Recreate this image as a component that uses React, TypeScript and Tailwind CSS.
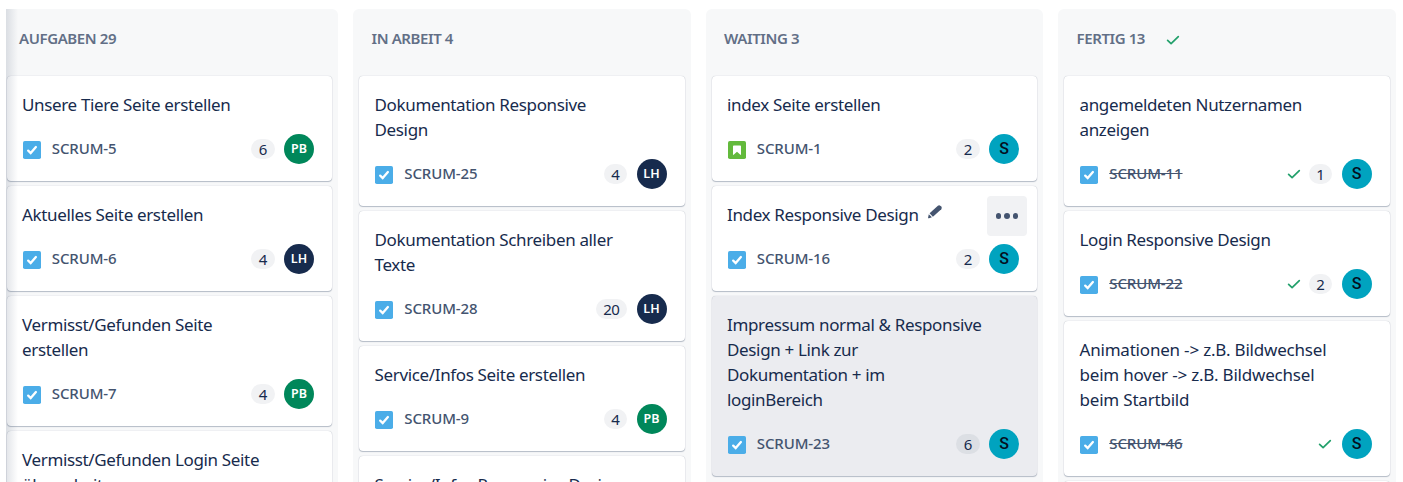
import React from 'react';

type Person = 'PB' | 'LH' | 'S';

interface Issue {
  lines: string[];
  id: string;
  points?: number;
  person: Person;
  story?: boolean;
  done?: boolean;
  hovered?: boolean;
  selected?: boolean;
  loose?: boolean;
}

interface ColumnData {
  title: string;
  done?: boolean;
  issues: Issue[];
}

const columns: ColumnData[] = [
  {
    title: 'AUFGABEN 29',
    issues: [
      { lines: ['Unsere Tiere Seite erstellen'], id: 'SCRUM-5', points: 6, person: 'PB' },
      { lines: ['Aktuelles Seite erstellen'], id: 'SCRUM-6', points: 4, person: 'LH' },
      { lines: ['Vermisst/Gefunden Seite', 'erstellen'], id: 'SCRUM-7', points: 4, person: 'PB' },
      { lines: ['Vermisst/Gefunden Login Seite', 'überarbeiten'], id: 'SCRUM-8', points: 4, person: 'PB' },
    ],
  },
  {
    title: 'IN ARBEIT 4',
    issues: [
      { lines: ['Dokumentation Responsive', 'Design'], id: 'SCRUM-25', points: 4, person: 'LH' },
      { lines: ['Dokumentation Schreiben aller', 'Texte'], id: 'SCRUM-28', points: 20, person: 'LH' },
      { lines: ['Service/Infos Seite erstellen'], id: 'SCRUM-9', points: 4, person: 'PB' },
      { lines: ['Service/Infos Responsive Design'], id: 'SCRUM-21', points: 4, person: 'PB' },
    ],
  },
  {
    title: 'WAITING 3',
    issues: [
      { lines: ['index Seite erstellen'], id: 'SCRUM-1', points: 2, person: 'S', story: true },
      { lines: ['Index Responsive Design'], id: 'SCRUM-16', points: 2, person: 'S', hovered: true },
      {
        lines: ['Impressum normal & Responsive', 'Design + Link zur', 'Dokumentation + im', 'loginBereich'],
        id: 'SCRUM-23',
        points: 6,
        person: 'S',
        selected: true,
      },
    ],
  },
  {
    title: 'FERTIG 13',
    done: true,
    issues: [
      { lines: ['angemeldeten Nutzernamen', 'anzeigen'], id: 'SCRUM-11', points: 1, person: 'S', done: true },
      { lines: ['Login Responsive Design'], id: 'SCRUM-22', points: 2, person: 'S', done: true },
      {
        lines: ['Animationen -> z.B. Bildwechsel', 'beim hover -> z.B. Bildwechsel', 'beim Startbild'],
        id: 'SCRUM-46',
        person: 'S',
        done: true,
        loose: true,
      },
      { lines: ['Startseite'], id: 'SCRUM-4', points: 2, person: 'S', done: true },
    ],
  },
];

const personStyle: Record<Person, string> = {
  PB: "bg-[#00875a] text-white text-[12.5px] font-semibold font-['Noto_Sans',sans-serif]",
  LH: "bg-[#172b4d] text-white text-[12.5px] font-semibold font-['Noto_Sans',sans-serif]",
  S: "bg-[#00a3bf] text-[#04101f] text-[16px] font-medium font-['Roboto',sans-serif]",
};

function TaskIcon() {
  return (
    <svg className="size-[18px] shrink-0" viewBox="0 0 18 18">
      <rect width="18" height="18" rx="1.8" fill="#4bade8" />
      <path d="M5.2 9.6 7.7 12 12.9 6" fill="none" stroke="#fff" strokeWidth="2.3" strokeLinecap="round" />
    </svg>
  );
}

function StoryIcon() {
  return (
    <svg className="size-[18px] shrink-0" viewBox="0 0 18 18">
      <rect width="18" height="18" rx="1.8" fill="#63ba3c" />
      <path d="M5 5.2Q5 4.4 5.8 4.4H12.2Q13 4.4 13 5.2V13.2Q13 14.4 12.1 13.6L9 10.8 5.9 13.6Q5 14.4 5 13.2Z" fill="#fff" />
    </svg>
  );
}

function DoneCheck() {
  return (
    <svg className="h-[10px] w-[14px] shrink-0" viewBox="0 0 14 10">
      <path d="M1.6 5.3 5.1 8.7 12.3 1.6" fill="none" stroke="#22a06b" strokeWidth="1.7" strokeLinecap="round" strokeLinejoin="round" />
    </svg>
  );
}

function Pencil() {
  return (
    <svg className="ml-[8.5px] mb-[5px] size-4 shrink-0" viewBox="0 0 16 16" fill="#44546f">
      <path d="M1.8 10.3 4.9 13.3 2 14.3Q.9 14.6 1.1 13.4Z" />
      <path d="M2.6 9.3 10.9 1.7Q12.2.7 13.6 2L14.2 2.6Q15.4 4 14.3 5.2L5.9 12.7Z" />
    </svg>
  );
}

function Card({ issue }: { issue: Issue }) {
  return (
    <article
      className={`relative shrink-0 rounded-[4px] px-[15.5px] pt-4 pb-[17px] shadow-[0_1px_1px_rgba(9,30,66,0.25),0_0_1px_rgba(9,30,66,0.31)] ${
        issue.selected ? 'bg-[#ebecf0]' : 'bg-white'
      }`}
    >
      <div
        className={`text-[17px] leading-[25px] text-[#172b4d] ${
          issue.loose ? 'tracking-[-0.2px]' : 'tracking-[-0.35px]'
        }`}
      >
        {issue.lines.map((line) => (
          <div key={line} className="flex items-center whitespace-nowrap">
            <span>{line}</span>
            {issue.hovered && <Pencil />}
          </div>
        ))}
      </div>
      {issue.hovered && (
        <button className="absolute top-[10px] right-[10px] flex size-10 items-center justify-center gap-[3.5px] rounded-[4px] bg-[#f1f2f4]">
          <i className="size-[5.25px] rounded-full bg-[#44546f]" />
          <i className="size-[5.25px] rounded-full bg-[#44546f]" />
          <i className="size-[5.25px] rounded-full bg-[#44546f]" />
        </button>
      )}
      <div className="mt-[17px] flex h-[30px] items-center pr-[2.5px]">
        <span className="mt-[2px] ml-[0.75px]">{issue.story ? <StoryIcon /> : <TaskIcon />}</span>
        <span
          className={`mb-[2px] ml-[11px] text-[15px] leading-5 font-medium tracking-[-0.1px] text-[#44546f] ${
            issue.done ? 'line-through' : ''
          }`}
        >
          {issue.id}
        </span>
        <span className="ml-auto flex items-center">
          {issue.done && <DoneCheck />}
          {issue.points !== undefined && (
            <span
              className={`ml-2 flex h-5 min-w-[23px] items-center justify-center rounded-full px-[7.5px] text-[15px] tracking-[-0.4px] text-[#172b4d] ${
                issue.selected ? 'bg-[#dcdfe4]' : 'bg-[#f1f2f4]'
              }`}
            >
              {issue.points}
            </span>
          )}
          <span className={`ml-[9.5px] flex size-[30px] items-center justify-center rounded-full ${personStyle[issue.person]}`}>
            {issue.person}
          </span>
        </span>
      </div>
    </article>
  );
}

function Column({ column }: { column: ColumnData }) {
  return (
    <section className="flex h-[520px] w-[337.5px] shrink-0 flex-col rounded-t-[6px] bg-[#f7f8f9] px-[6px]">
      <header className="flex h-[67px] shrink-0 items-center pb-[10px] pl-[12.5px]">
        <h2 className="text-[15px] leading-5 font-semibold tracking-[-0.4px] text-[#626f86]">{column.title}</h2>
        {column.done && (
          <span className="mt-[5px] ml-[21px]">
            <DoneCheck />
          </span>
        )}
      </header>
      <div className="flex flex-col gap-[5px]">
        {column.issues.map((issue) => (
          <Card key={issue.id} issue={issue} />
        ))}
      </div>
    </section>
  );
}

export default function App() {
  return (
    <main className="h-[482px] w-[1403px] overflow-hidden bg-white pt-[9px] pl-[6px] font-['Noto_Sans',sans-serif]">
      <div className="relative h-[473px] overflow-hidden">
        <div className="-ml-[5.5px] flex gap-[15px]">
          {columns.map((column) => (
            <Column key={column.title} column={column} />
          ))}
        </div>
        <div className="pointer-events-none absolute inset-y-0 left-0 w-[12px] bg-linear-to-r from-[#091e42]/12 to-transparent" />
      </div>
    </main>
  );
}
